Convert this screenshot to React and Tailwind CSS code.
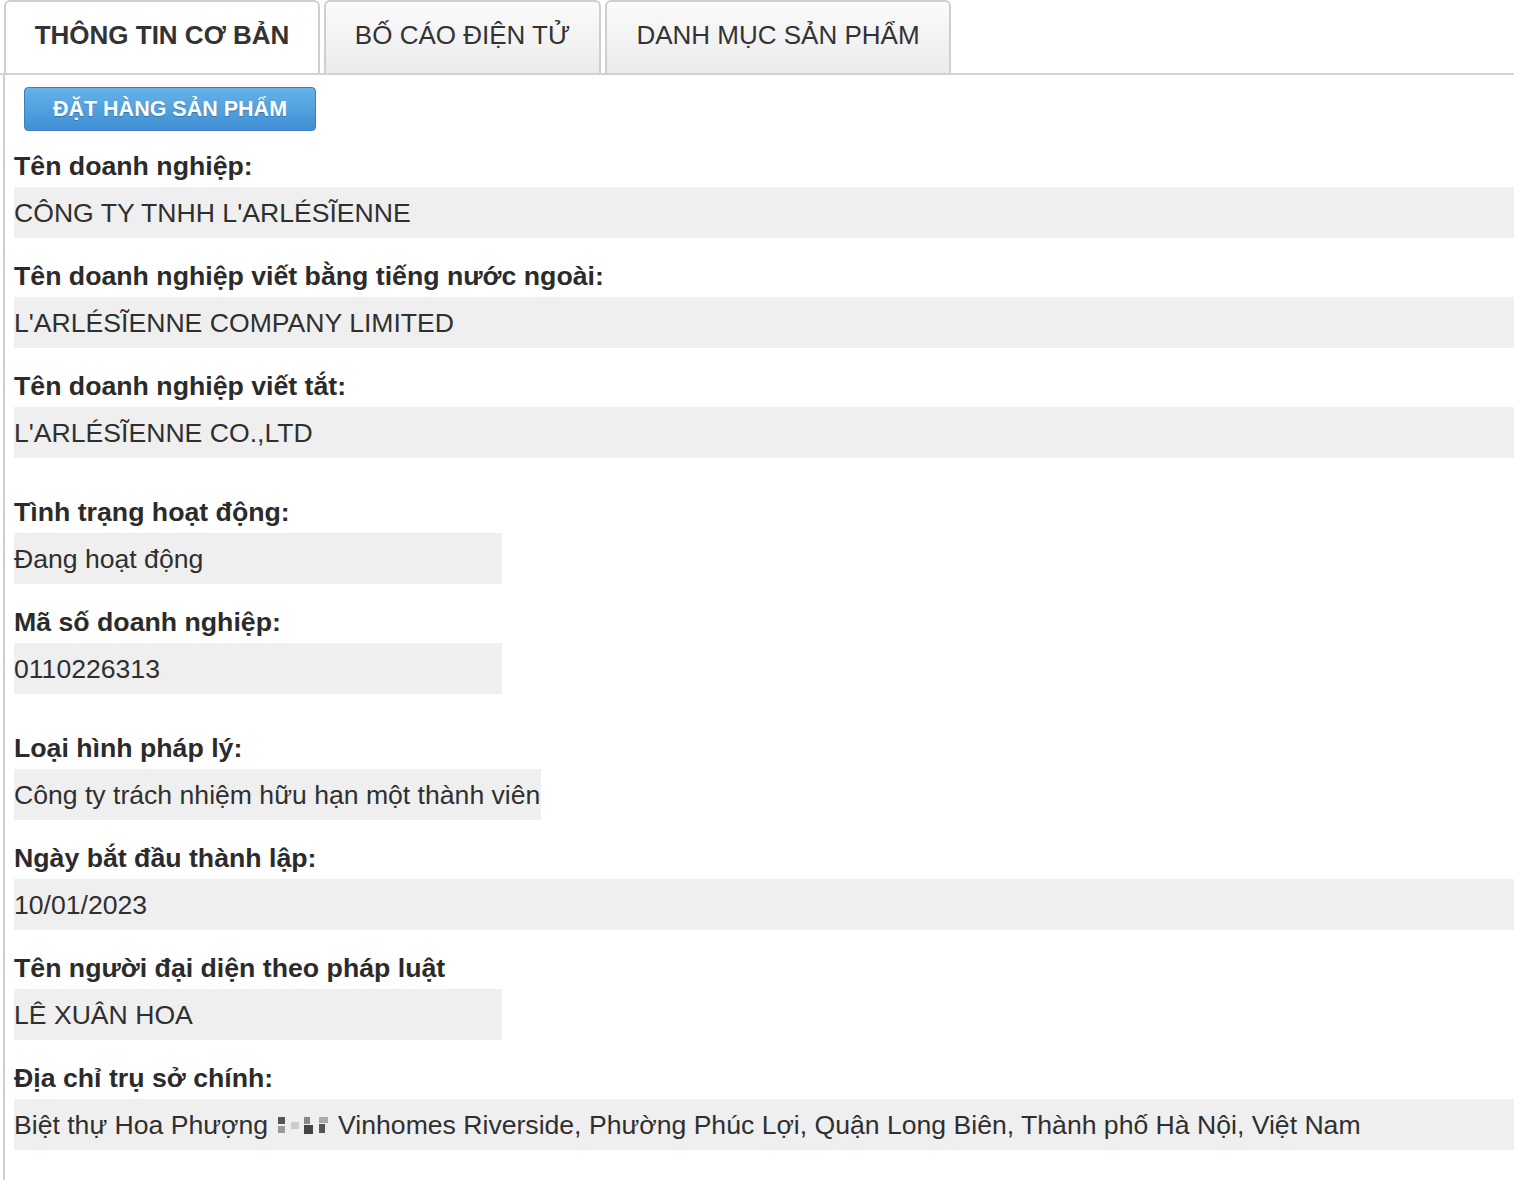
import React from "react";

const tabs = [
  { label: "THÔNG TIN CƠ BẢN", width: "w-[316px]", active: true },
  { label: "BỐ CÁO ĐIỆN TỬ", width: "w-[277px]", active: false },
  { label: "DANH MỤC SẢN PHẨM", width: "w-[346px]", active: false },
];

function Field({ label, value, size = "full", className = "" }) {
  const boxWidth =
    size === "full" ? "w-full" : size === "half" ? "w-[488px]" : "w-fit pr-[1px]";
  return (
    <div className={className}>
      <div className="text-[26.7px] font-bold leading-[38px] text-[#2b2b2b]">{label}</div>
      <div
        className={`mt-[2px] flex h-[51px] items-center bg-[#efefef] pt-[1px] text-[26.6px] leading-none text-[#2f2f2f] ${boxWidth}`}
      >
        {value}
      </div>
    </div>
  );
}

function Masked() {
  return (
    <span className="mx-[10px] inline-flex w-[50px] items-center justify-between align-middle">
      <span className="flex flex-col gap-[2px]">
        <span className="h-[7px] w-[7px] bg-[#555]" />
        <span className="h-[7px] w-[7px] bg-[#999]" />
      </span>
      <span className="h-[7px] w-[8px] bg-[#ccc]" />
      <span className="flex flex-col gap-[1px]">
        <span className="h-[7px] w-[6px] bg-[#888]" />
        <span className="h-[9px] w-[9px] bg-[#444]" />
      </span>
      <span className="flex flex-col gap-[1px]">
        <span className="h-[6px] w-[9px] bg-[#aaa]" />
        <span className="h-[9px] w-[6px] bg-[#555]" />
      </span>
    </span>
  );
}

export default function App() {
  return (
    <div className="h-[1180px] w-[1514px] overflow-hidden bg-white font-['Liberation_Sans',Arial,sans-serif] text-[#333]">
      <div className="flex h-[75px] items-end gap-[4px] border-b-2 border-[#d2d2d2] pl-[4px]">
        {tabs.map((t) => (
          <div
            key={t.label}
            className={`flex h-[73px] items-center justify-center rounded-t-[6px] border-2 border-b-0 border-[#cfcfcf] text-[26px] text-[#333] ${t.width} ${
              t.active
                ? "bg-white font-bold"
                : "bg-gradient-to-b from-[#fbfbfb] to-[#ebebeb] font-normal"
            }`}
          >
            <span className="-mt-[4px]">{t.label}</span>
          </div>
        ))}
      </div>

      <div className="ml-[3px] h-full border-l-2 border-[#cfcfcf] pl-[9px]">
        <div className="pt-[12px] pl-[10px]">
          <button className="flex h-[44px] w-[292px] items-center justify-center rounded-[4px] border border-[#3b7dbd] bg-gradient-to-b from-[#66b3e9] to-[#3e8fd4] text-[21.5px] font-bold text-white [text-shadow:0_1px_1px_rgba(0,0,0,0.25)]">
            ĐẶT HÀNG SẢN PHẨM
          </button>
        </div>

        <Field className="mt-[16px]" label="Tên doanh nghiệp:" value="CÔNG TY TNHH L'ARLÉSĨENNE" />
        <Field
          className="mt-[19px]"
          label="Tên doanh nghiệp viết bằng tiếng nước ngoài:"
          value="L'ARLÉSĨENNE COMPANY LIMITED"
        />
        <Field className="mt-[19px]" label="Tên doanh nghiệp viết tắt:" value="L'ARLÉSĨENNE CO.,LTD" />

        <Field className="mt-[35px]" label="Tình trạng hoạt động:" value="Đang hoạt động" size="half" />
        <Field className="mt-[19px]" label="Mã số doanh nghiệp:" value="0110226313" size="half" />

        <Field
          className="mt-[35px]"
          label="Loại hình pháp lý:"
          value="Công ty trách nhiệm hữu hạn một thành viên"
          size="fit"
        />
        <Field className="mt-[19px]" label="Ngày bắt đầu thành lập:" value="10/01/2023" />
        <Field
          className="mt-[19px]"
          label="Tên người đại diện theo pháp luật"
          value="LÊ XUÂN HOA"
          size="half"
        />
        <Field
          className="mt-[19px]"
          label="Địa chỉ trụ sở chính:"
          value={
            <span className="flex items-center">
              Biệt thự Hoa Phượng
              <Masked />
              Vinhomes Riverside, Phường Phúc Lợi, Quận Long Biên, Thành phố Hà Nội, Việt Nam
            </span>
          }
        />
      </div>
    </div>
  );
}
